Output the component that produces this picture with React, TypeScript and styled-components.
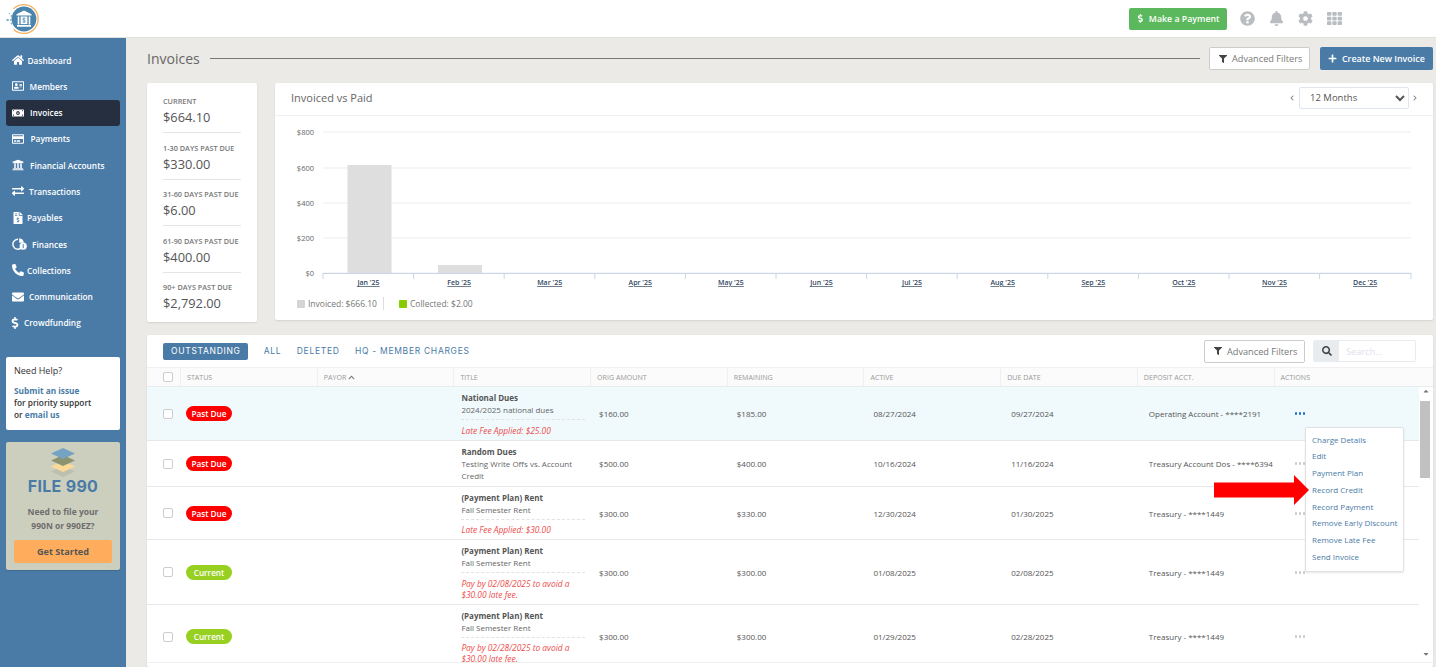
import React from 'react';
import styled, { createGlobalStyle } from 'styled-components';
import {
  FaHome, FaRegAddressCard, FaMoneyBillAlt, FaRegCreditCard, FaUniversity, FaExchangeAlt,
  FaFileInvoiceDollar, FaPhoneAlt, FaEnvelope, FaDollarSign, FaQuestionCircle,
  FaBell, FaCog, FaTh, FaFilter, FaPlus, FaSearch, FaChevronLeft, FaChevronRight, FaChevronUp,
  FaCaretUp, FaCaretDown,
} from 'react-icons/fa';

const BLUE = '#4a7ba7';

const GlobalStyle = createGlobalStyle`
  html, body { margin: 0; height: 100%; overflow: hidden; }
  body { font-family: "Open Sans", "Liberation Sans", sans-serif; color: #555; background: #eceae6; }
  #root { height: 100%; }
  * { box-sizing: border-box; }
`;

// === Shell ===
const Page = styled.div`
  display: flex;
  flex-direction: column;
  height: 667px;
  overflow: hidden;
`;

const TopBar = styled.header`
  flex: 0 0 38px;
  display: flex;
  align-items: center;
  background: #fff;
  border-bottom: 1px solid #e2e0dc;
  padding: 0 94px 0 6px;
  z-index: 2;
`;

const LogoBox = styled.div`
  flex: 1;
  display: flex;
  align-items: center;
`;

const PayButton = styled.button`
  display: flex;
  align-items: center;
  gap: 4px;
  height: 22px;
  width: 98px;
  padding: 0 0 0 7px;
  border: none;
  border-radius: 2px;
  background: #5cb85c;
  color: #fff;
  font: 600 8.8px "Open Sans", sans-serif;
  margin-right: 13px;
  white-space: nowrap;
`;

const TopIcon = styled.span`
  display: flex;
  color: #b9bdc1;
  font-size: 15px;
  margin-left: 14px;
  width: 15px;
  justify-content: center;
  &:first-of-type { margin-left: 0; }
`;

const Body = styled.div`
  flex: 1;
  display: flex;
  min-height: 0;
`;

// === Sidebar ===
const Sidebar = styled.nav`
  flex: 0 0 126px;
  background: ${BLUE};
  padding: 9px 6px 0;
  display: flex;
  flex-direction: column;
`;

const NavItem = styled.a<{ $active?: boolean; $gap: number }>`
  display: flex;
  align-items: center;
  gap: ${p => p.$gap}px;
  height: 26px;
  margin-bottom: 0.3px;
  padding-left: 6px;
  border-radius: 3px;
  color: #fff;
  font-size: 8.3px;
  font-weight: 600;
  white-space: nowrap;
  background: ${p => (p.$active ? '#252f40' : 'transparent')};
  svg { height: 12px; width: auto; flex: none; }
`;

const NavDollar = styled(FaDollarSign)`
  margin-left: -3px;
`;

const HelpCard = styled.div`
  margin-top: 21px;
  height: 73px;
  background: #fff;
  border-radius: 2px;
  padding: 8px;
  font-size: 8.3px;
  font-weight: 600;
  color: #333;
  line-height: 12.3px;
`;

const HelpTitle = styled.div`
  font-weight: 400;
  font-size: 9px;
  margin-bottom: 7px;
`;

const HelpLink = styled.span`
  color: ${BLUE};
  font-weight: 700;
`;

const FileCard = styled.div`
  margin-top: 12px;
  height: 128px;
  background: #cdcfbe;
  border-radius: 2px;
  padding: 6px 8px 0;
  display: flex;
  flex-direction: column;
  align-items: center;
  box-shadow: 0 1px 1px rgba(0, 0, 0, 0.15);
`;

const FileTitle = styled.div`
  font: 700 16px/18px Inter, "Open Sans", sans-serif;
  color: ${BLUE};
  letter-spacing: 0.3px;
  margin-top: -1px;
`;

const FileText = styled.div`
  font-size: 8.5px;
  font-weight: 700;
  color: #6d6d6d;
  line-height: 13.5px;
  text-align: center;
  margin-top: 10px;
`;

const StartButton = styled.button`
  width: 98px;
  height: 23px;
  margin-top: 8px;
  border: none;
  border-radius: 2px;
  background: #ffad5c;
  color: #555;
  font: 700 9.1px "Open Sans", sans-serif;
`;

// === Main ===
const Main = styled.main`
  flex: 1;
  min-width: 0;
  padding: 9px 3px 0 21px;
  display: flex;
  flex-direction: column;
`;

const TitleRow = styled.div`
  display: flex;
  align-items: center;
  height: 23px;
`;

const PageTitle = styled.h1`
  margin: 0 10px 0 0;
  font-size: 14px;
  font-weight: 400;
  color: #666;
`;

const TitleRule = styled.div`
  flex: 1;
  height: 1px;
  background: #777;
  margin-right: 9px;
`;

const OutlineButton = styled.button`
  display: flex;
  align-items: center;
  gap: 5px;
  width: 101px;
  height: 23px;
  padding: 0 0 0 9px;
  background: #fff;
  border: 1px solid #ccc;
  border-radius: 2px;
  color: #777;
  font: 400 9.2px "Open Sans", sans-serif;
  white-space: nowrap;
  svg { color: #444; font-size: 8px; }
`;

const CreateButton = styled.button`
  display: flex;
  align-items: center;
  gap: 5px;
  width: 113px;
  height: 23px;
  margin-left: 10px;
  padding: 0 0 0 8px;
  background: ${BLUE};
  border: none;
  border-radius: 2px;
  color: #fff;
  font: 600 8.9px "Open Sans", sans-serif;
  white-space: nowrap;
  svg { font-size: 9px; }
`;

const TopRow = styled.div`
  display: flex;
  gap: 18px;
  margin-top: 13px;
  height: 239px;
`;

const Card = styled.section`
  background: #fff;
  border-radius: 2px;
  box-shadow: 0 1px 2px rgba(0, 0, 0, 0.1);
`;

const AgingCard = styled(Card)`
  flex: 0 0 110px;
  padding: 13px 16px 0;
`;

const AgingItem = styled.div`
  padding-bottom: 5px;
  margin-bottom: 9.5px;
  border-bottom: 1px solid #e4e4e4;
  &:last-child { border-bottom: none; }
`;

const AgingLabel = styled.div`
  font-size: 7.3px;
  font-weight: 600;
  color: #777;
  line-height: 11px;
  text-transform: uppercase;
  white-space: nowrap;
`;

const AgingValue = styled.div`
  font-size: 12.8px;
  color: #555;
  line-height: 20px;
`;

const ChartCard = styled(Card)`
  flex: 1;
  height: 237px;
  display: flex;
  flex-direction: column;
`;

const ChartHead = styled.div`
  flex: 0 0 33px;
  display: flex;
  align-items: center;
  padding: 0 15px 3px 16px;
  border-bottom: 1px solid #f0f0f0;
  color: #777;
  svg { font-size: 6px; color: #888; }
`;

const ChartTitle = styled.div`
  flex: 1;
  font-size: 11px;
  color: #666;
`;

const RangeSelect = styled.select`
  width: 110px;
  height: 22px;
  margin: 0 3px 0 4px;
  padding: 0 0 0 6px;
  background: #fff;
  border: 1px solid #dfe6ef;
  border-radius: 2px;
  color: #555;
  font: 400 9.5px "Open Sans", sans-serif;
`;

const ChartSvg = styled.svg`
  display: block;
  width: 1158px;
  height: 174px;
  font-family: "Open Sans", sans-serif;
`;

const Legend = styled.div`
  display: flex;
  align-items: center;
  padding: 7px 0 0 22px;
  font-size: 8.5px;
  color: #777;
`;

const Swatch = styled.span<{ $color: string }>`
  width: 8px;
  height: 8px;
  border-radius: 1px;
  margin-right: 3px;
  background: ${p => p.$color};
`;

const LegendSep = styled.span`
  width: 1px;
  height: 13px;
  background: #ddd;
  margin: 0 15px 0 6px;
`;

// === Invoice table ===
const TableCard = styled(Card)`
  margin-top: 13px;
  flex: 1;
  min-height: 0;
  position: relative;
`;

const Toolbar = styled.div`
  height: 32px;
  display: flex;
  align-items: center;
  padding: 0 17px 0 16px;
`;

const Tab = styled.a<{ $active?: boolean }>`
  display: flex;
  align-items: center;
  height: 17px;
  margin-right: 15.5px;
  padding: ${p => (p.$active ? '0 7.5px 0 8px' : '0')};
  border-radius: 2px;
  background: ${p => (p.$active ? BLUE : 'transparent')};
  color: ${p => (p.$active ? '#fff' : BLUE)};
  font: 400 8.5px Inter, "Open Sans", sans-serif;
  letter-spacing: 0.7px;
  text-transform: uppercase;
  white-space: nowrap;
`;

const Spacer = styled.div`
  flex: 1;
`;

const SearchGroup = styled.div`
  display: flex;
  width: 103px;
  height: 22px;
  margin-left: 8px;
  border: 1px solid #e8ecf1;
  border-radius: 2px;
  overflow: hidden;
`;

const SearchAddon = styled.span`
  flex: 0 0 25px;
  display: flex;
  align-items: center;
  justify-content: center;
  background: #e9ecef;
  color: #444;
  font-size: 10px;
`;

const SearchInput = styled.input`
  flex: 1;
  min-width: 0;
  border: none;
  padding: 0 0 0 7px;
  font: 400 9.2px "Open Sans", sans-serif;
  &::placeholder { color: #dde3ea; }
`;

const COLUMNS = '33px repeat(9, 136.7px)';

const HeadRow = styled.div`
  display: grid;
  grid-template-columns: ${COLUMNS};
  height: 20px;
  border-top: 1px solid #f0f0f0;
  border-bottom: 1px solid #e8ecef;
  background: #fbfbfb;
`;

const HeadCell = styled.div`
  display: flex;
  align-items: center;
  gap: 2px;
  padding-left: 6px;
  border-left: 1px solid #f0f0f0;
  font-size: 7.1px;
  color: #999;
  text-transform: uppercase;
  svg { font-size: 7px; color: #777; }
  &:first-child { border-left: none; padding-left: 0; }
`;

const BodyWrap = styled.div`
  display: flex;
  height: 276px;
  overflow: hidden;
  border-bottom: 1px solid #f0f0f0;
`;

const Rows = styled.div`
  flex: 0 0 1272px;
`;

const Row = styled.div<{ $hl?: boolean }>`
  display: grid;
  grid-template-columns: ${COLUMNS};
  align-items: center;
  padding: 5px 0 4px;
  background: ${p => (p.$hl ? '#f0f9fc' : '#fff')};
  border-bottom: 1px solid #e8e8e8;
`;

const Check = styled.input.attrs({ type: 'checkbox' })`
  appearance: none;
  margin: 0 0 0 16px;
  width: 10px;
  height: 10px;
  background: #fff;
  border: 1px solid #ccc;
  border-radius: 2px;
`;

const Pill = styled.span<{ $color: string }>`
  display: flex;
  align-items: center;
  justify-content: center;
  width: 46px;
  height: 15px;
  margin-left: 6px;
  border-radius: 8px;
  background: ${p => p.$color};
  color: #fff;
  font-size: 8.2px;
  font-weight: 600;
`;

const TitleCell = styled.div`
  padding: 0 5px 0 8px;
  font-size: 8px;
  line-height: 12px;
  color: #666;
`;

const RowTitle = styled.div`
  font-weight: 700;
  color: #555;
`;

const RowNote = styled.div`
  margin-top: 3px;
  padding-top: 4.5px;
  border-top: 1px dashed #e2e2e2;
  color: #ee4c4c;
  font-size: 8.4px;
  font-style: italic;
  line-height: 11px;
`;

const Cell = styled.div<{ $pad?: number }>`
  padding-left: ${p => p.$pad ?? 9}px;
  font-size: 8px;
  color: #555;
  white-space: nowrap;
`;

const Dots = styled.div<{ $on?: boolean }>`
  display: flex;
  gap: 1.6px;
  padding-left: 21px;
  span {
    width: 2.6px;
    height: 2.6px;
    border-radius: 50%;
    background: ${p => (p.$on ? '#1f6fc9' : '#c8c8c8')};
  }
`;

const ScrollTrack = styled.div`
  flex: 0 0 13px;
  position: relative;
  display: flex;
  flex-direction: column;
  align-items: center;
  justify-content: space-between;
  color: #777;
  font-size: 8px;
  padding: 0 0 4px;
  svg { display: block; }
`;

const ScrollThumb = styled.div`
  position: absolute;
  top: 14px;
  left: 1px;
  width: 10px;
  height: 77px;
  background: #c1c1c1;
`;

const ActionMenu = styled.ul`
  position: absolute;
  top: 92px;
  left: 1158px;
  width: 99px;
  height: 145px;
  margin: 0;
  padding: 3.5px 0 0 6px;
  list-style: none;
  background: #fff;
  border: 1px solid #dfe3e8;
  border-radius: 2px;
  box-shadow: 0 1px 2px rgba(0, 0, 0, 0.1);
  z-index: 3;
`;

const ActionItem = styled.li`
  height: 16.8px;
  line-height: 16.8px;
  font-size: 8px;
  color: ${BLUE};
  white-space: nowrap;
`;

const RedArrow = styled.svg`
  position: absolute;
  top: 140px;
  left: 1067px;
  width: 95px;
  height: 30px;
  z-index: 4;
`;

// === Drawings ===
const FinanceIcon = () => (
  <svg viewBox="0 0 15 12" fill="none">
    <path d="M6 1.2a5 5 0 1 0 3.6 8.4" stroke="#fff" strokeWidth="1.4" />
    <path d="M7.2 0.2a5 5 0 0 1 4.6 4.6H7.2z" fill="#fff" />
    <circle cx="11.2" cy="8.2" r="3.6" fill="#fff" />
    <path d="M11.2 6.2v4" stroke={BLUE} strokeWidth="1" />
  </svg>
);

const Logo = () => (
  <svg width="36" height="34" viewBox="0 0 36 34">
    <path d="M7.6 6.8A14.4 14.4 0 1 1 7.6 27.2" fill="none" stroke="#f5b264" strokeWidth="1.3" />
    <circle cx="18" cy="17" r="12.4" fill="#4a84ad" />
    <path d="M18 8.5l7.5 3.8v1.2h-15v-1.2z M11 23h14v1.8H11z" fill="#fff" />
    <path d="M12.5 14.5v8M23.5 14.5v8" stroke="#fff" strokeWidth="1.6" />
    <rect x="14.6" y="14.5" width="6.8" height="7.6" fill="#fff" />
    <path d="M18 15.6v5.4M19.4 16.6c-.8-.7-2.8-.7-2.8.5 0 1.400 2.800 .8 2.800 2.200 0 1.100-2 1.100-2.800 .4" stroke="#4a84ad" strokeWidth="0.7" fill="none" />
    <g fill="#7fb0cf">
      <circle cx="1.600" cy="18" r="1.300" />
      <circle cx="5" cy="18" r="1" />
      <circle cx="5.500" cy="14" r="1" />
      <circle cx="5.500" cy="21.500" r="1" />
      <circle cx="3.500" cy="11.500" r="0.700" />
    </g>
  </svg>
);

const Stack = () => (
  <svg width="26" height="30" viewBox="0 0 26 30">
    <path d="M13 18l12 5.500L13 29 1 23.500z" fill="#bdbfb0" />
    <path d="M13 13l12 5.500L13 24 1 18.500z" fill="#fbd998" />
    <path d="M13 7l12 5.500L13 18 1 12.500z" fill="#8d936f" />
    <path d="M13 0l12 5.500L13 11 1 5.500z" fill="#74a3c4" />
  </svg>
);

// === Data ===
const navItems = [
  { label: 'Dashboard', icon: <FaHome />, gap: 3.5 },
  { label: 'Members', icon: <FaRegAddressCard />, gap: 5.5 },
  { label: 'Invoices', icon: <FaMoneyBillAlt />, gap: 6 },
  { label: 'Payments', icon: <FaRegCreditCard />, gap: 6.5 },
  { label: 'Financial Accounts', icon: <FaUniversity />, gap: 6 },
  { label: 'Transactions', icon: <FaExchangeAlt />, gap: 5 },
  { label: 'Payables', icon: <FaFileInvoiceDollar />, gap: 3 },
  { label: 'Finances', icon: <FinanceIcon />, gap: 5 },
  { label: 'Collections', icon: <FaPhoneAlt />, gap: 3 },
  { label: 'Communication', icon: <FaEnvelope />, gap: 5 },
  { label: 'Crowdfunding', icon: <NavDollar />, gap: 3 },
];

const aging = [
  ['Current', '$664.10'],
  ['1-30 days past due', '$330.00'],
  ['31-60 days past due', '$6.00'],
  ['61-90 days past due', '$400.00'],
  ['90+ days past due', '$2,792.00'],
];

const months = ["Jan '25", "Feb '25", "Mar '25", "Apr '25", "May '25", "Jun '25", "Jul '25", "Aug '25", "Sep '25", "Oct '25", "Nov '25", "Dec '25"];
const yTicks = [['$800', 16], ['$600', 52], ['$400', 87], ['$200', 122], ['$0', 157]] as const;

const PAST = '#ff0000';
const CURRENT = '#97d021';

const rows = [
  { status: 'Past Due', color: PAST, title: 'National Dues', desc: '2024/2025 national dues', note: 'Late Fee Applied: $25.00', orig: '$160.00', rem: '$185.00', active: '08/27/2024', due: '09/27/2024', acct: 'Operating Account - ****2191', hl: true },
  { status: 'Past Due', color: PAST, title: 'Random Dues', desc: 'Testing Write Offs vs. Account Credit', orig: '$500.00', rem: '$400.00', active: '10/16/2024', due: '11/16/2024', acct: 'Treasury Account Dos - ****6394' },
  { status: 'Past Due', color: PAST, title: '(Payment Plan) Rent', desc: 'Fall Semester Rent', note: 'Late Fee Applied: $30.00', orig: '$300.00', rem: '$330.00', active: '12/30/2024', due: '01/30/2025', acct: 'Treasury - ****1449' },
  { status: 'Current', color: CURRENT, title: '(Payment Plan) Rent', desc: 'Fall Semester Rent', note: 'Pay by 02/08/2025 to avoid a $30.00 late fee.', orig: '$300.00', rem: '$300.00', active: '01/08/2025', due: '02/08/2025', acct: 'Treasury - ****1449' },
  { status: 'Current', color: CURRENT, title: '(Payment Plan) Rent', desc: 'Fall Semester Rent', note: 'Pay by 02/28/2025 to avoid a $30.00 late fee.', orig: '$300.00', rem: '$300.00', active: '01/29/2025', due: '02/28/2025', acct: 'Treasury - ****1449' },
];

const menuItems = ['Charge Details', 'Edit', 'Payment Plan', 'Record Credit', 'Record Payment', 'Remove Early Discount', 'Remove Late Fee', 'Send Invoice'];

const Chart = () => (
  <ChartSvg viewBox="0 0 1158 174">
    {yTicks.map(([label, y]) => (
      <g key={label}>
        <line x1="48" x2="1136" y1={y} y2={y} stroke="#ebedf0" />
        <text x="39" y={y + 3} fontSize="7.5" fill="#666" textAnchor="end">{label}</text>
      </g>
    ))}
    <rect x="72.500" y="49" width="44" height="108" fill="#dedede" />
    <rect x="163" y="149" width="44" height="8" fill="#dedede" />
    <line x1="48" x2="1136" y1="157.500" y2="157.500" stroke="#c8d6e8" />
    {months.map((m, i) => (
      <g key={m}>
        <line x1={48 + i * 90.6} x2={48 + i * 90.6} y1="157" y2="163" stroke="#c8d6e8" />
        <text x={93.5 + i * 90.6} y="169" fontSize="7" fontWeight="600" fill="#33475f" textAnchor="middle" textDecoration="underline">{m}</text>
      </g>
    ))}
    <line x1="1136" x2="1136" y1="157" y2="163" stroke="#c8d6e8" />
  </ChartSvg>
);

export default function App() {
  return (
    <Page>
      <GlobalStyle />
      <TopBar>
        <LogoBox><Logo /></LogoBox>
        <PayButton><FaDollarSign />Make a Payment</PayButton>
        <TopIcon><FaQuestionCircle /></TopIcon>
        <TopIcon><FaBell /></TopIcon>
        <TopIcon><FaCog /></TopIcon>
        <TopIcon><FaTh /></TopIcon>
      </TopBar>
      <Body>
        <Sidebar>
          {navItems.map(item => (
            <NavItem key={item.label} $gap={item.gap} $active={item.label === 'Invoices'}>
              {item.icon}
              {item.label}
            </NavItem>
          ))}
          <HelpCard>
            <HelpTitle>Need Help?</HelpTitle>
            <HelpLink>Submit an issue</HelpLink>
            <br />for priority support
            <br />or <HelpLink>email us</HelpLink>
          </HelpCard>
          <FileCard>
            <Stack />
            <FileTitle>FILE 990</FileTitle>
            <FileText>Need to file your<br />990N or 990EZ?</FileText>
            <StartButton>Get Started</StartButton>
          </FileCard>
        </Sidebar>
        <Main>
          <TitleRow>
            <PageTitle>Invoices</PageTitle>
            <TitleRule />
            <OutlineButton><FaFilter />Advanced Filters</OutlineButton>
            <CreateButton><FaPlus />Create New Invoice</CreateButton>
          </TitleRow>
          <TopRow>
            <AgingCard>
              {aging.map(([label, value]) => (
                <AgingItem key={label}>
                  <AgingLabel>{label}</AgingLabel>
                  <AgingValue>{value}</AgingValue>
                </AgingItem>
              ))}
            </AgingCard>
            <ChartCard>
              <ChartHead>
                <ChartTitle>Invoiced vs Paid</ChartTitle>
                <FaChevronLeft />
                <RangeSelect defaultValue="12"><option value="12">12 Months</option></RangeSelect>
                <FaChevronRight />
              </ChartHead>
              <Chart />
              <Legend>
                <Swatch $color="#d4d4d4" />Invoiced: $666.10
                <LegendSep />
                <Swatch $color="#86cc00" />Collected: $2.00
              </Legend>
            </ChartCard>
          </TopRow>
          <TableCard>
            <Toolbar>
              <Tab $active>Outstanding</Tab>
              <Tab>All</Tab>
              <Tab>Deleted</Tab>
              <Tab>HQ - Member Charges</Tab>
              <Spacer />
              <OutlineButton><FaFilter />Advanced Filters</OutlineButton>
              <SearchGroup>
                <SearchAddon><FaSearch /></SearchAddon>
                <SearchInput placeholder="Search..." />
              </SearchGroup>
            </Toolbar>
            <HeadRow>
              <HeadCell><Check /></HeadCell>
              <HeadCell>Status</HeadCell>
              <HeadCell>Payor <FaChevronUp /></HeadCell>
              <HeadCell>Title</HeadCell>
              <HeadCell>Orig Amount</HeadCell>
              <HeadCell>Remaining</HeadCell>
              <HeadCell>Active</HeadCell>
              <HeadCell>Due Date</HeadCell>
              <HeadCell>Deposit Acct.</HeadCell>
              <HeadCell>Actions</HeadCell>
            </HeadRow>
            <BodyWrap>
              <Rows>
                {rows.map((r, i) => (
                  <Row key={i} $hl={r.hl}>
                    <Check />
                    <Pill $color={r.color}>{r.status}</Pill>
                    <div />
                    <TitleCell>
                      <RowTitle>{r.title}</RowTitle>
                      {r.desc}
                      {r.note && <RowNote>{r.note}</RowNote>}
                    </TitleCell>
                    <Cell>{r.orig}</Cell>
                    <Cell $pad={10}>{r.rem}</Cell>
                    <Cell $pad={10}>{r.active}</Cell>
                    <Cell $pad={11}>{r.due}</Cell>
                    <Cell $pad={12}>{r.acct}</Cell>
                    <Dots $on={r.hl}><span /><span /><span /></Dots>
                  </Row>
                ))}
              </Rows>
              <ScrollTrack>
                <FaCaretUp />
                <ScrollThumb />
                <FaCaretDown />
              </ScrollTrack>
            </BodyWrap>
            <ActionMenu>
              {menuItems.map(m => <ActionItem key={m}>{m}</ActionItem>)}
            </ActionMenu>
            <RedArrow viewBox="0 0 95 30">
              <path d="M0 7.500h80V0l15 15-15 15v-7.500H0z" fill="#ff0000" />
            </RedArrow>
          </TableCard>
        </Main>
      </Body>
    </Page>
  );
}
